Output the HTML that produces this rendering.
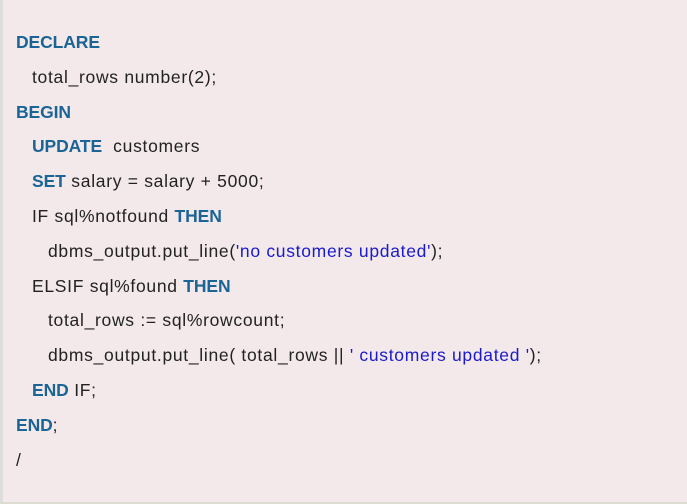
<!DOCTYPE html>
<html><head><style>
html,body{margin:0;padding:0;}
body{width:687px;height:504px;background:#f3e9ea;position:relative;overflow:hidden;font-family:"Liberation Sans",sans-serif;font-size:17.5px;color:#222;}
.lb{position:absolute;left:0;top:0;width:3px;height:504px;background:#ddd;}
.bb{position:absolute;left:0;bottom:0;width:687px;height:2px;background:#dcdcd2;}
.c{position:absolute;left:16px;top:25px;line-height:34.8px;letter-spacing:0.7px;}
.c div{white-space:pre;}
b{color:#1a6496;letter-spacing:-0.1px;}
.s{color:#1a1acc;}
.i1{padding-left:16px}.i2{padding-left:32px}
</style></head><body>
<div class="lb"></div><div class="bb"></div>
<div class="c">
<div><b>DECLARE</b></div>
<div class="i1">total_rows number(2);</div>
<div><b>BEGIN</b></div>
<div class="i1"><b>UPDATE</b>  customers</div>
<div class="i1"><b>SET</b> salary = salary + 5000;</div>
<div class="i1">IF sql%notfound <b>THEN</b></div>
<div class="i2">dbms_output.put_line(<span class="s">'no customers updated'</span>);</div>
<div class="i1">ELSIF sql%found <b>THEN</b></div>
<div class="i2">total_rows := sql%rowcount;</div>
<div class="i2">dbms_output.put_line( total_rows || <span class="s">' customers updated '</span>);</div>
<div class="i1"><b>END</b> IF;</div>
<div><b>END</b>;</div>
<div>/</div>
</div>
</body></html>
